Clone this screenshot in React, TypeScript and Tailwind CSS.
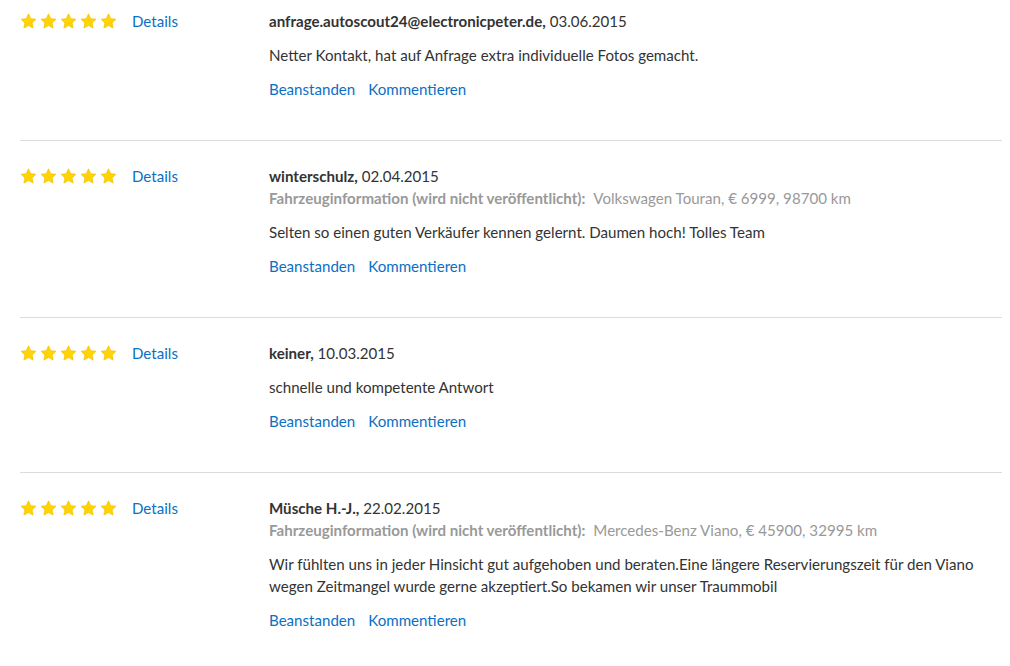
import React from "react";

type Review = {
  author: string;
  date: string;
  vehicle?: string;
  text: string;
};

const reviews: Review[] = [
  {
    author: "anfrage.autoscout24@electronicpeter.de",
    date: "03.06.2015",
    text: "Netter Kontakt, hat auf Anfrage extra individuelle Fotos gemacht.",
  },
  {
    author: "winterschulz",
    date: "02.04.2015",
    vehicle: "Volkswagen Touran, € 6999, 98700 km",
    text: "Selten so einen guten Verkäufer kennen gelernt. Daumen hoch! Tolles Team",
  },
  {
    author: "keiner",
    date: "10.03.2015",
    text: "schnelle und kompetente Antwort",
  },
  {
    author: "Müsche H.-J.",
    date: "22.02.2015",
    vehicle: "Mercedes-Benz Viano, € 45900, 32995 km",
    text: "Wir fühlten uns in jeder Hinsicht gut aufgehoben und beraten.Eine längere Reservierungszeit für den Viano wegen Zeitmangel wurde gerne akzeptiert.So bekamen wir unser Traummobil",
  },
];

function Star() {
  return (
    <svg width="17" height="16" viewBox="0 0 24 23" className="shrink-0">
      <path
        d="M12 1.2l3.2 6.9 7.5.9-5.5 5.2 1.4 7.5L12 18l-6.6 3.7 1.4-7.5L1.3 9l7.5-.9z"
        fill="#ffd400"
        stroke="#f5bf00"
        strokeWidth="1"
        strokeLinejoin="round"
      />
    </svg>
  );
}

function ReviewRow({ review, first }: { review: Review; first: boolean }) {
  return (
    <div className={`flex ${first ? "pt-[10px]" : "pt-[24px] border-t border-[#dcdcdc]"} pb-[40px]`}>
      <div className="flex w-[249px] shrink-0 items-start">
        <div className="flex gap-[3px] pt-[3px]">
          {[0, 1, 2, 3, 4].map((i) => (
            <Star key={i} />
          ))}
        </div>
        <a className="ml-[15px] text-[#0b6fc4] cursor-pointer">Details</a>
      </div>
      <div className="flex-1 min-w-0 pr-[20px]">
        <div className="text-[#333]">
          <span className="font-bold">{review.author},</span> {review.date}
        </div>
        {review.vehicle && (
          <div className="text-[#999]">
            <span className="font-bold">Fahrzeuginformation (wird nicht veröffentlicht):</span>
            <span className="ml-[8px]">{review.vehicle}</span>
          </div>
        )}
        <p className="mt-[12px] text-[#333]">{review.text}</p>
        <div className="mt-[12px] flex gap-[13px] text-[#0b6fc4]">
          <a className="cursor-pointer">Beanstanden</a>
          <a className="cursor-pointer">Kommentieren</a>
        </div>
      </div>
    </div>
  );
}

export default function App() {
  return (
    <div className="bg-white min-h-screen pl-[20px] pr-[8px] text-[15.1px] leading-[22px] font-['Lato',sans-serif]">
      {reviews.map((r, i) => (
        <ReviewRow key={r.author} review={r} first={i === 0} />
      ))}
    </div>
  );
}
